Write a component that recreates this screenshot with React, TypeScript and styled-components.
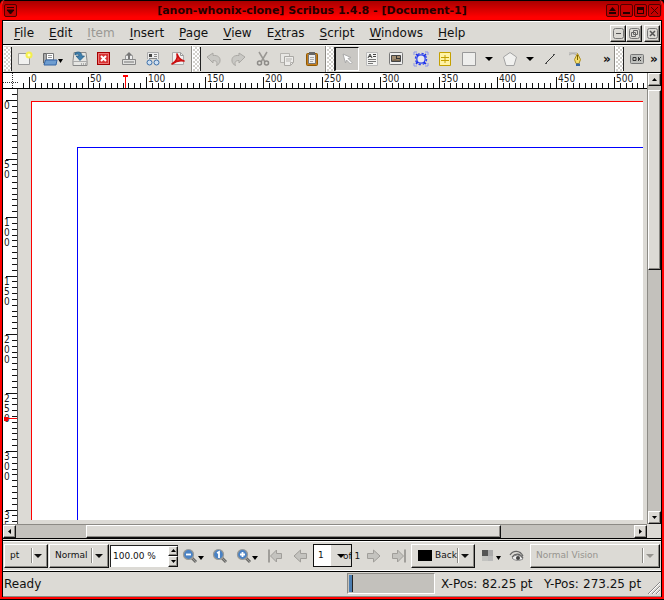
import React, { useLayoutEffect, useRef, useState } from "react";
import styled, { createGlobalStyle, css } from "styled-components";

const face = "#dcdad5";
const trough = "#c3c1bc";
const shade = "#8c8a85";

const Global = createGlobalStyle`
  *, *::before, *::after { box-sizing: border-box; }
  html, body { margin: 0; background: #000; }
  body { font: 12px/16px "DejaVu Sans", sans-serif; color: #111; }
  button, input, select { font: inherit; color: inherit; margin: 0; }
  svg { display: block; flex: none; }
`;

const raised = css`
  background: ${face};
  border: 1px solid;
  border-color: #fff #111 #111 #fff;
  box-shadow: inset -1px -1px 0 ${shade};
`;

const Shell = styled.div`
  height: 100vh;
  padding-bottom: 1px;
  overflow: hidden;
  background: #000;
`;

const Frame = styled.div`
  display: flex;
  flex-direction: column;
  height: 100%;
  overflow: hidden;
  background: ${face};
  border: solid #f00;
  border-width: 0 2px 2px;
  border-radius: 5px 5px 0 0;
`;

const TitleBar = styled.header`
  display: flex;
  align-items: center;
  flex: none;
  height: 21px;
  padding: 0 0 0 2px;
  border-top: 1px solid #000;
  border-bottom: 1px solid #000;
  background: linear-gradient(#a80000, #f00 85%);
`;

const Title = styled.h1`
  flex: 1;
  margin: 0;
  text-align: center;
  white-space: nowrap;
  overflow: hidden;
  font-size: 11px;
  line-height: 16px;
  font-weight: bold;
  color: #240000;
`;

const TitleButton = styled.button`
  display: grid;
  place-items: center;
  width: 13px;
  height: 13px;
  padding: 0;
  margin-right: 1px;
  border: 1px solid #500000;
  border-radius: 2px;
  background: #c40000;
`;

const Body = styled.div`
  display: flex;
  flex-direction: column;
  flex: 1;
  min-height: 0;
  border: solid #000;
  border-width: 0 1px;
`;

const MenuBar = styled.nav`
  display: flex;
  align-items: center;
  flex: none;
  height: 24px;
  padding: 0 1px 0 11px;
  gap: 15px;
  border-top: 1px solid #fff;
  border-bottom: 1px solid #000;
`;

const MenuItem = styled.button`
  border: 0;
  padding: 0;
  background: none;
  line-height: 16px;
  &:disabled { color: #9a9894; }
  u { text-underline-offset: 2px; }
`;

const MdiButtons = styled.div`
  display: flex;
  margin-left: auto;
  button:last-child { margin-left: 2px; }
`;

const MdiButton = styled.button`
  ${raised}
  display: grid;
  place-items: center;
  width: 16px;
  height: 17px;
  padding: 0;
`;

const ToolRow = styled.div`
  display: flex;
  flex: none;
  height: 28px;
  border-top: 1px solid #fff;
  border-bottom: 1px solid #000;
`;

const ToolGroup = styled.div<{ $width?: number }>`
  display: flex;
  align-items: center;
  justify-content: space-between;
  flex: ${(p) => (p.$width ? `0 0 ${p.$width}px` : "1 0 auto")};
  padding-right: 1px;
  border-left: 1px solid #fff;
  border-right: 1px solid ${shade};
`;

const Handle = styled.span`
  flex: none;
  align-self: stretch;
  width: 8px;
  margin: 1px 0;
  border-right: 1px solid #222;
  background-color: #d2d0cb;
  background-image: radial-gradient(circle at 1px 1px, #fff 1px, transparent 1px),
    radial-gradient(circle at 3px 3px, #fff 1px, transparent 1px);
  background-size: 4px 4px;
`;

const ToolButton = styled.button<{ $w?: number; $pressed?: boolean }>`
  display: flex;
  align-items: center;
  justify-content: center;
  flex: none;
  width: ${(p) => p.$w ?? 24}px;
  height: 24px;
  padding: 0;
  border: 0;
  background: none;
  font-size: 12px;
  svg + svg { margin-top: 4px; }
  ${(p) =>
    p.$pressed &&
    css`
      background: #cac8c4;
      border: 1px solid;
      border-color: #111 #fff #fff #111;
    `}
`;

const MoreButton = styled(ToolButton)`
  font-weight: bold;
`;

const Spacer = styled.span`
  flex: 1;
`;

const Work = styled.main`
  display: grid;
  grid-template-columns: 15px minmax(0, 1fr) 14px;
  grid-template-rows: 16px minmax(0, 1fr) 14px;
  flex: 1;
  min-height: 0;
  border-bottom: 1px solid #000;
`;

const Corner = styled.div`
  background: #fff;
  border: solid #000;
  border-width: 0 0 1px;
`;

const HRuler = styled.div`
  overflow: hidden;
  background: #fff;
  border-bottom: 1px solid #000;
`;

const VRuler = styled.div`
  min-height: 0;
  overflow: hidden;
  background: #fff;
  border-right: 1px solid #555;
`;

const Canvas = styled.section`
  min-width: 0;
  min-height: 0;
  padding: 12px 4px 4px 13px;
  background: ${face};
`;

const Sheet = styled.div`
  height: 100%;
  padding: 45px 0 0 45px;
  border: solid #f00;
  border-width: 1px 0 0 1px;
  background: #fff;
`;

const Margins = styled.div`
  height: 100%;
  border: solid #00f;
  border-width: 1px 0 0 1px;
`;

const VScroll = styled.div`
  display: flex;
  flex-direction: column;
  grid-row: 1 / 3;
  grid-column: 3;
  background: ${trough};
  border-left: 1px solid ${shade};
`;

const HScroll = styled.div`
  display: flex;
  grid-column: 1 / 3;
  background: ${trough};
  border-top: 1px solid ${shade};
`;

const ScrollButton = styled.button`
  ${raised}
  display: grid;
  place-items: center;
  flex: none;
  width: 13px;
  height: 13px;
  padding: 0;
`;

const Gap = styled.span<{ $grow: number }>`
  flex: ${(p) => p.$grow} 1 0;
`;

const Thumb = styled.span<{ $grow: number }>`
  ${raised}
  flex: ${(p) => p.$grow} 1 0;
`;

const BottomBar = styled.div`
  display: flex;
  align-items: center;
  flex: none;
  height: 32px;
  padding: 0 0 1px 1px;
  margin-top: 1px;
  border-top: 1px solid #000;
  border-bottom: 1px solid #000;
  box-shadow: inset 0 1px 0 #fff, inset 0 -1px 0 #fff;
  font-size: 9px;
  line-height: 14px;
`;

const Combo = styled.label<{ $w?: number; $divider: number; $mute?: boolean }>`
  ${raised}
  position: relative;
  display: flex;
  align-items: center;
  flex: ${(p) => (p.$w ? `0 0 ${p.$w}px` : "1 1 0")};
  height: 24px;
  margin-right: 1px;
  color: ${(p) => (p.$mute ? "#96948f" : "#111")};
  &::before {
    content: "";
    position: absolute;
    top: 3px;
    bottom: 4px;
    right: ${(p) => p.$divider}px;
    border-left: 1px solid ${shade};
    border-right: 1px solid #fff;
  }
  &::after {
    content: "";
    position: absolute;
    right: 5px;
    top: 9px;
    border: 4px solid transparent;
    border-top: 4px solid currentColor;
    border-bottom: 0;
  }
`;

const Select = styled.select<{ $pad: number }>`
  appearance: none;
  width: 100%;
  height: 100%;
  padding: 0 16px 1px ${(p) => p.$pad}px;
  border: 0;
  background: none;
  opacity: 1;
  white-space: nowrap;
`;

const Swatch = styled.span`
  flex: none;
  width: 14px;
  height: 11px;
  margin-left: 6px;
  background: #000;
`;

const Spin = styled.div`
  display: flex;
  flex: none;
  width: 68px;
  height: 22px;
  border: solid #222;
  border-width: 1px 0 0 1px;
  background: #fff;
  input {
    flex: 1;
    min-width: 0;
    padding: 0 0 0 2px;
    border: 0;
    background: none;
  }
`;

const SpinArrows = styled.div`
  display: flex;
  flex-direction: column;
  width: 10px;
  button {
    ${raised}
    display: grid;
    place-items: center;
    flex: 1;
    width: 10px;
    min-height: 0;
    padding: 0;
  }
`;

const PageCombo = styled.label`
  display: flex;
  flex: none;
  position: relative;
  width: 39px;
  height: 23px;
  border: 1px solid #111;
  background: linear-gradient(90deg, #fff 17px, ${face} 17px);
  &::after {
    content: "";
    position: absolute;
    left: 23px;
    top: 9px;
    border: 4px solid transparent;
    border-top: 4px solid #000;
    border-bottom: 0;
  }
`;

const PageCount = styled.span`
  z-index: 1;
  margin-left: -9px;
  width: 18px;
  white-space: nowrap;
`;

const StatusBar = styled.footer`
  display: flex;
  align-items: center;
  flex: none;
  height: 25px;
  padding-left: 1px;
  border-bottom: 1px solid ${shade};
`;

const Progress = styled.div`
  width: 88px;
  height: 21px;
  margin: 0 6px 2px auto;
  padding: 1px;
  border: 1px solid;
  border-color: ${shade} #fff #fff ${shade};
  background: ${trough};
  &::before {
    content: "";
    display: block;
    width: 4px;
    height: 100%;
    background: #4b7db0;
    border-right: 1px solid #222;
  }
`;

const Coord = styled.span<{ $gap: number; $w: number }>`
  flex: none;
  width: ${(p) => p.$w}px;
  margin-right: ${(p) => p.$gap}px;
  white-space: nowrap;
`;

const rulerFont = '"DejaVu Sans Condensed", "Open Sans", sans-serif';
const STEP = 585;
const at = (origin: number, i: number) => origin + Math.round((i * STEP) / 100);
const range = (a: number, b: number) => Array.from({ length: Math.max(0, b - a) }, (_, i) => a + i);

function useSize() {
  const ref = useRef<HTMLDivElement>(null);
  const [size, setSize] = useState({ w: 0, h: 0 });
  useLayoutEffect(() => {
    const node = ref.current;
    if (!node) return;
    const read = () => setSize({ w: node.clientWidth, h: node.clientHeight });
    read();
    const observer = new ResizeObserver(read);
    observer.observe(node);
    return () => observer.disconnect();
  }, []);
  return [ref, size] as const;
}

const HorizontalScale = () => {
  const [ref, { w }] = useSize();
  const ticks = Math.ceil(((w - 11) * 100) / STEP);
  const labels = Math.ceil(((w - 31) * 10) / STEP);
  return (
    <HRuler ref={ref}>
      <svg width="100%" height="15" shapeRendering="crispEdges">
        {range(-1, ticks).map((i) => (
          <rect key={i} x={at(11, i)} y={i % 10 === 0 ? 4 : 10} width="1" height="12" fill="#111" />
        ))}
        {range(0, labels).map((i) => (
          <text key={i} x={at(11, i * 10) + 2} y="9" fontFamily={rulerFont} fontSize="10" fill="#222">
            {i * 50}
          </text>
        ))}
        <path d="M105 2h5v2h-2v11h-1V4h-2z" fill="#f00" />
      </svg>
    </HRuler>
  );
};

const VerticalScale = () => {
  const [ref, { h }] = useSize();
  const ticks = Math.ceil(((h - 11) * 100) / STEP);
  const digits = range(0, Math.ceil(ticks / 10)).flatMap((i) =>
    String(i * 50)
      .split("")
      .map((digit, n) => ({ digit, key: `${i}-${n}`, y: at(11, i * 10) + 9 + n * 10 }))
  );
  return (
    <VRuler ref={ref}>
      <svg width="14" height={h} shapeRendering="crispEdges">
        {range(-1, ticks).map((i) => (
          <rect key={i} x={i % 10 === 0 ? 3 : 9} y={at(11, i)} width="12" height="1" fill="#111" />
        ))}
        {digits
          .filter((d) => d.y < h + 6)
          .map((d) => (
            <text key={d.key} x="1" y={d.y} fontFamily={rulerFont} fontSize="10" fill="#222">
              {d.digit}
            </text>
          ))}
        <path d="M1 328h4v1h9v1H5v2H1z" fill="#f00" />
      </svg>
    </VRuler>
  );
};

const Svg = ({ w = 16, h = 16, children }: { w?: number; h?: number; children: React.ReactNode }) => (
  <svg width={w} height={h} viewBox={`0 0 ${w} ${h}`} fill="none" aria-hidden="true">
    {children}
  </svg>
);

const Down = ({ w = 7 }: { w?: number }) => (
  <Svg w={w} h={4}>
    <path d={`M0 0h${w}L${w / 2} 4z`} fill="#000" />
  </Svg>
);

const Small = ({ d }: { d: string }) => (
  <Svg w={5} h={5}>
    <path d={d} fill="#000" />
  </Svg>
);
const UP = "M2.5 1L5 4H0z";
const DOWN = "M0 1h5L2.5 4z";
const LEFT = "M1 2.5L4 0v5z";
const RIGHT = "M4 2.5L1 0v5z";

const icons = {
  create: (
    <Svg>
      <path d="M1.500 2.500h11v11h-11z" fill="#f1f1ef" stroke="#999" />
      <circle cx="12" cy="4" r="3.500" fill="#f4ef4d" />
      <circle cx="12" cy="4" r="1.500" fill="#ffffc0" />
    </Svg>
  ),
  open: (
    <Svg>
      <path d="M1.500 12V2.500h4l1 1h5V12z" fill="#aaa" stroke="#666" />
      <path d="M4.500 2.500h7V9h-7z" fill="#fff" stroke="#777" />
      <path d="M6 4.500h4M6 6.500h4" stroke="#999" />
      <path d="M2 14l1.500-5h11.500l-1 5z" fill="#6e9dd0" stroke="#3465a4" />
    </Svg>
  ),
  save: (
    <Svg>
      <path d="M2 1.500h12l1 8v5H1v-5z" fill="#e6e6e3" stroke="#888" />
      <path d="M1 10.500h14" stroke="#aaa" />
      <path d="M9 13h5" stroke="#777" strokeDasharray="1 1" />
      <path d="M3 2c3-2 7-1 7 3h2.500L8 9.500 4 5h3c0-2-2-2.500-4-1z" fill="#3f7fae" stroke="#1f587e" strokeWidth=".7" />
    </Svg>
  ),
  close: (
    <Svg>
      <rect x="1.500" y="1.500" width="12" height="12" fill="#d83434" stroke="#a40000" />
      <path d="M2.500 2.500h10v10h-10z" stroke="#ee7777" />
      <path d="M5 5l5 5m0-5l-5 5" stroke="#fff" strokeWidth="2" />
    </Svg>
  ),
  print: (
    <Svg>
      <path d="M4.500 8V4.500h7V8" fill="#eee" stroke="#999" />
      <path d="M8 1l3 3H9v4H7V4H5z" fill="#777" />
      <path d="M1.500 8.500h13v5h-13z" fill="#e2e2e0" stroke="#888" />
      <path d="M3 11h10" stroke="#777" />
    </Svg>
  ),
  preflight: (
    <Svg>
      <path d="M2.500 8V1.500h11V8" fill="#eee" stroke="#aaa" />
      <path d="M4 3h3v3H4z" fill="#444" />
      <path d="M9 3.500h3M9 5.500h3M4 7.500h8" stroke="#888" />
      <circle cx="4.500" cy="11.500" r="2.500" fill="#cfe0f2" stroke="#3b6ea8" />
      <circle cx="11.500" cy="11.500" r="2.500" fill="#cfe0f2" stroke="#3b6ea8" />
    </Svg>
  ),
  pdf: (
    <Svg>
      <path d="M2.500 1.500h8l3 3v9h-11z" fill="#f1f1f1" stroke="#aaa" />
      <path d="M10.500 1.500v3h3" stroke="#999" />
      <path d="M7 3c2 4 3 6 7 7-4-1-8 0-12 3 5-3 6-6 5-10z" fill="#e53b3b" stroke="#cc1111" strokeWidth="1.600" strokeLinejoin="round" />
    </Svg>
  ),
  undo: (
    <Svg>
      <path d="M1 6l6-4v2.500c5-.5 7.500 2 7 5.500 0 2-1.500 3.500-3.500 4.500 1-3 .5-5-3.500-5V12z" fill="#c9c8c4" stroke="#aaa8a4" />
    </Svg>
  ),
  redo: (
    <Svg>
      <path d="M15 6L9 2v2.500C4 4 1.500 6.500 2 10c0 2 1.500 3.500 3.500 4.500C4.500 11.500 5 9.500 9 9.500V12z" fill="#c9c8c4" stroke="#aaa8a4" />
    </Svg>
  ),
  cut: (
    <Svg>
      <path d="M4 1l6 10M12 1L6 11" stroke="#999793" strokeWidth="1.500" />
      <circle cx="4.500" cy="12" r="2" stroke="#8d8b88" strokeWidth="1.500" />
      <circle cx="11.500" cy="12" r="2" stroke="#8d8b88" strokeWidth="1.500" />
    </Svg>
  ),
  copy: (
    <Svg>
      <path d="M1.500 2.500h9v9h-9z" fill="#e8e7e4" stroke="#b5b3af" />
      <path d="M5.500 5.500h9v6l-3 3h-6z" fill="#eeedeb" stroke="#aaa8a4" />
      <path d="M7 8h6M7 10h5M11.500 14.500v-3h3" stroke="#b5b3af" />
    </Svg>
  ),
  paste: (
    <Svg>
      <rect x="2.500" y="2.500" width="11" height="12" rx="1" fill="#c47c1c" stroke="#8f5902" />
      <path d="M4.500 3.500h7v9h-7z" fill="#eee" stroke="#777" />
      <path d="M5 1h6v3H5z" fill="#666" />
      <path d="M6 6.500h4M6 8.500h4M6 10.500h3" stroke="#aaa" />
    </Svg>
  ),
  select: (
    <Svg>
      <path d="M4 3l8 3.500-3 1 4 4-1.500 1.500-4-4-1 3z" fill="#fff" stroke="#aaa" />
    </Svg>
  ),
  text: (
    <Svg>
      <path d="M2.500 1.500h11v13h-11z" fill="#f4f4f2" stroke="#bbb" />
      <path d="M4 7l2-4 2 4M5 5.500h2M9 3.500h3M9 5.500h3" stroke="#444" />
      <path d="M4 8.500h8M4 10.500h8M4 12.500h5" stroke="#777" />
    </Svg>
  ),
  image: (
    <Svg>
      <rect x="1.500" y="1.500" width="13" height="12" rx="1" fill="#eee" stroke="#777" />
      <path d="M3.500 4.500h9v6h-9z" fill="#a28d72" stroke="#444" />
      <path d="M4 9l3-1 3 1 2-1v2H4z" fill="#7b6a52" />
      <path d="M8 5h1v3H8zM9 7h3v1H9z" fill="#333" />
    </Svg>
  ),
  render: (
    <Svg>
      <circle cx="8" cy="8" r="5.500" stroke="#2f45ee" strokeWidth="1.500" strokeDasharray="2.300 2" />
      <circle cx="8" cy="8" r="4.200" fill="#e9e8ee" stroke="#2f45ee" strokeWidth="1.300" />
      <path d="M1 4V1h3M12 1h3v3M1 12v3h3M12 15h3v-3" stroke="#8c96ea" />
      <path d="M3 3l2 2M13 3l-2 2M3 13l2-2M13 13l-2-2" stroke="#1d2ee8" strokeWidth="1.500" />
    </Svg>
  ),
  table: (
    <Svg>
      <path d="M2.500 1.500h11v13h-11z" fill="#fff3a5" stroke="#c4a000" />
      <path d="M8 4v8M4 6.500h8M4 9.500h8" stroke="#c4a000" />
    </Svg>
  ),
  shape: (
    <Svg>
      <path d="M1.500 1.500h13v13h-13z" fill="#eeeeec" stroke="#999" />
    </Svg>
  ),
  polygon: (
    <Svg>
      <path d="M8 1.500L14.500 6 12 14.500H4L1.500 6z" fill="#f1f1ef" stroke="#a3a3a3" />
    </Svg>
  ),
  line: (
    <Svg>
      <path d="M4 12l8-8" stroke="#333" />
      <path d="M3 12h2v1H3zM11 3h2v1h-2z" fill="#555" />
    </Svg>
  ),
  bezier: (
    <Svg>
      <path d="M1 4c3-2 7-2 8 2M1 2h8" stroke="#aaa" />
      <path d="M9.500 2.500l3 6-1.500 4H8L6.500 8.500z" fill="#f5df70" stroke="#ad8d1a" />
      <path d="M9.500 4v5" stroke="#7a6100" />
      <path d="M8 12.500h4V15H8z" fill="#3465a4" />
    </Svg>
  ),
  ok: (
    <Svg>
      <rect x="1.500" y="3.500" width="13" height="9" rx="1" fill="#bfc0bd" stroke="#777" />
      <path d="M4 6.500h3v3H4zM9.500 6v4M12 6l-2 2 2 2" stroke="#333" />
    </Svg>
  ),
};

const Lens = ({ mark }: { mark: string }) => (
  <Svg>
    <path d="M10 10l4 4" stroke="#6b6b68" strokeWidth="3" />
    <path d="M10 10l4 4" stroke="#999" />
    <circle cx="6.500" cy="6.500" r="5" fill="#4a82c4" stroke="#9a9a96" strokeWidth="1.200" />
    <path d={mark} stroke="#fff" strokeWidth="1.800" />
  </Svg>
);

const Arrow = ({ flip, stop }: { flip?: boolean; stop?: boolean }) => (
  <Svg>
    <g transform={flip ? "matrix(-1 0 0 1 16 0)" : undefined}>
      <path
        d={stop ? "M1.500 5.500h5v-3.500l6 6-6 6v-3.500h-5z" : "M1.500 5.500h6V2l6.500 6-6.500 6v-3.500h-6z"}
        fill="#c4c3bf"
        stroke="#a09e9a"
      />
      {stop && <path d="M14 1.500v13" stroke="#a09e9a" strokeWidth="2" />}
    </g>
  </Svg>
);

const Menu = ({ before = "", k, rest, off }: { before?: string; k: string; rest: string; off?: boolean }) => (
  <MenuItem disabled={off}>
    {before}
    <u>{k}</u>
    {rest}
  </MenuItem>
);

const Tool = ({ name, pressed, w }: { name: keyof typeof icons; pressed?: boolean; w?: number }) => (
  <ToolButton aria-label={name} $pressed={pressed} $w={w}>
    {icons[name]}
  </ToolButton>
);

export default function App() {
  return (
    <Shell>
      <Global />
      <Frame>
        <TitleBar>
          <TitleButton aria-label="Window menu">
            <Svg w={9} h={9}>
              <path d="M1 1.500h7M1 4h7L4.500 8z" stroke="#200" fill="#200" />
            </Svg>
          </TitleButton>
          <Title>[anon-whonix-clone] Scribus 1.4.8 - [Document-1]</Title>
          <TitleButton aria-label="Shade">
            <Svg w={9} h={9}>
              <path d="M1 5h7L4.500 1zM1 6h7v2H1z" fill="#200" />
            </Svg>
          </TitleButton>
          <TitleButton aria-label="Minimize">
            <Svg w={9} h={9}>
              <path d="M1 6h7v2H1z" fill="#200" />
            </Svg>
          </TitleButton>
          <TitleButton aria-label="Maximize">
            <Svg w={9} h={9}>
              <path d="M1 1h7v7H1zM2 4v3h5V4z" fill="#200" fillRule="evenodd" />
            </Svg>
          </TitleButton>
          <TitleButton aria-label="Close window">
            <Svg w={9} h={9}>
              <path d="M1 1l7 7M8 1L1 8" stroke="#400" />
            </Svg>
          </TitleButton>
        </TitleBar>
        <Body>
          <MenuBar>
            <Menu k="F" rest="ile" />
            <Menu k="E" rest="dit" />
            <Menu k="I" rest="tem" off />
            <Menu k="I" rest="nsert" />
            <Menu k="P" rest="age" />
            <Menu k="V" rest="iew" />
            <Menu before="E" k="x" rest="tras" />
            <Menu k="S" rest="cript" />
            <Menu k="W" rest="indows" />
            <Menu k="H" rest="elp" />
            <MdiButtons>
              <MdiButton aria-label="Minimize document">
                <Svg w={11} h={11}>
                  <rect x=".5" y=".5" width="10" height="10" rx="2" stroke="#777" />
                  <path d="M3 5.500h5" stroke="#555" />
                </Svg>
              </MdiButton>
              <MdiButton aria-label="Restore document">
                <Svg w={11} h={11}>
                  <rect x=".5" y=".5" width="10" height="10" rx="2" stroke="#777" />
                  <path d="M4.500 2.500h4v4h-4zM2.500 4.500h4v4h-4z" stroke="#666" />
                </Svg>
              </MdiButton>
              <MdiButton aria-label="Close document">
                <Svg w={11} h={11}>
                  <rect x=".5" y=".5" width="10" height="10" rx="2" stroke="#777" />
                  <path d="M3 3l5 5M8 3L3 8" stroke="#555" strokeWidth="1.500" />
                </Svg>
              </MdiButton>
            </MdiButtons>
          </MenuBar>
          <ToolRow>
            <ToolGroup $width={189}>
              <Handle />
              <Tool name="create" />
              <ToolButton $w={30} aria-label="open">
                {icons.open}
                <Down w={5} />
              </ToolButton>
              <Tool name="save" />
              <Tool name="close" />
              <Tool name="print" />
              <Tool name="preflight" />
              <Tool name="pdf" />
            </ToolGroup>
            <ToolGroup $width={134}>
              <Handle />
              <Tool name="undo" />
              <Tool name="redo" />
              <Tool name="cut" />
              <Tool name="copy" />
              <Tool name="paste" />
            </ToolGroup>
            <ToolGroup>
              <Handle />
              <Tool name="select" pressed />
              <Tool name="text" w={25} />
              <Tool name="image" />
              <Tool name="render" w={25} />
              <Tool name="table" />
              <Tool name="shape" />
              <ToolButton $w={16} aria-label="shape list">
                <Down w={8} />
              </ToolButton>
              <Tool name="polygon" w={26} />
              <ToolButton $w={14} aria-label="polygon settings">
                <Down w={8} />
              </ToolButton>
              <Tool name="line" w={26} />
              <Tool name="bezier" w={26} />
              <Spacer />
              <MoreButton $w={12} aria-label="more tools">
                »
              </MoreButton>
            </ToolGroup>
            <ToolGroup $width={46}>
              <Handle />
              <Tool name="ok" />
              <MoreButton $w={10} aria-label="more PDF tools">
                »
              </MoreButton>
            </ToolGroup>
          </ToolRow>
          <Work>
            <Corner>
              <Svg w={15} h={15}>
                <path d="M0 9.500h15M9.500 0v15" stroke="#333" strokeDasharray="1 1" />
              </Svg>
            </Corner>
            <HorizontalScale />
            <VScroll>
              <ScrollButton aria-label="Scroll up">
                <Small d={UP} />
              </ScrollButton>
              <Gap $grow={4} />
              <Thumb $grow={179} />
              <Gap $grow={243} />
              <ScrollButton aria-label="Scroll down">
                <Small d={DOWN} />
              </ScrollButton>
            </VScroll>
            <VerticalScale />
            <Canvas>
              <Sheet>
                <Margins />
              </Sheet>
            </Canvas>
            <HScroll>
              <ScrollButton aria-label="Scroll left">
                <Small d={LEFT} />
              </ScrollButton>
              <Gap $grow={70} />
              <Thumb $grow={415} />
              <Gap $grow={133} />
              <ScrollButton aria-label="Scroll right">
                <Small d={RIGHT} />
              </ScrollButton>
            </HScroll>
          </Work>
          <BottomBar>
            <Combo $w={44} $divider={14}>
              <Select $pad={5} aria-label="Unit">
                <option>pt</option>
              </Select>
            </Combo>
            <Combo $w={60} $divider={15}>
              <Select $pad={5} aria-label="Preview quality">
                <option>Normal</option>
              </Select>
            </Combo>
            <Spin>
              <input aria-label="Zoom" defaultValue="100.00 %" />
              <SpinArrows>
                <button aria-label="Increase zoom">
                  <Small d={UP} />
                </button>
                <button aria-label="Decrease zoom">
                  <Small d={DOWN} />
                </button>
              </SpinArrows>
            </Spin>
            <ToolButton $w={30} aria-label="Zoom out">
              <Lens mark="M4 6.500h5" />
              <Down w={6} />
            </ToolButton>
            <ToolButton $w={24} aria-label="Zoom to 100%">
              <Lens mark="M5 5l2-1v6" />
            </ToolButton>
            <ToolButton $w={30} aria-label="Zoom in">
              <Lens mark="M4 6.500h5M6.500 4v5" />
              <Down w={6} />
            </ToolButton>
            <ToolButton $w={25} aria-label="First page">
              <Arrow flip stop />
            </ToolButton>
            <ToolButton $w={26} aria-label="Previous page">
              <Arrow flip />
            </ToolButton>
            <PageCombo>
              <Select $pad={4} aria-label="Current page">
                <option>1</option>
              </Select>
            </PageCombo>
            <PageCount>of 1</PageCount>
            <ToolButton $w={25} aria-label="Next page">
              <Arrow />
            </ToolButton>
            <ToolButton $w={25} aria-label="Last page">
              <Arrow stop />
            </ToolButton>
            <Combo $w={64} $divider={15}>
              <Swatch />
              <Select $pad={3} aria-label="Layer">
                <option>Back</option>
              </Select>
            </Combo>
            <ToolButton $w={28} aria-label="Color management">
              <Svg>
                <path d="M2 2h6v6H2z" fill="#555" />
                <path d="M8 2h5v6H8z" fill="#aaa" />
                <path d="M2 8h6v5H2z" fill="#c3c3c0" />
                <path d="M8 8h5v5H8z" fill="#bbb" />
              </Svg>
              <Down w={5} />
            </ToolButton>
            <ToolButton $w={26} aria-label="Preview mode">
              <Svg>
                <path d="M3 10c3-4 8-4 11 1-4 2-8 2-11-1z" stroke="#888" fill="#eee" />
                <path d="M1 7c3-5 10-5 13 1M3 9c3-4 8-4 11 1" stroke="#666" strokeWidth="1.200" />
                <circle cx="9" cy="10" r="2" fill="#444" />
              </Svg>
            </ToolButton>
            <Combo $divider={15} $mute>
              <Select $pad={5} aria-label="Vision" disabled>
                <option>Normal Vision</option>
              </Select>
            </Combo>
          </BottomBar>
          <StatusBar>
            <span>Ready</span>
            <Progress role="progressbar" aria-label="Progress" />
            <Coord $w={35} $gap={6}>
              X-Pos:
            </Coord>
            <Coord $w={50} $gap={12}>
              82.25 pt
            </Coord>
            <Coord $w={33} $gap={6}>
              Y-Pos:
            </Coord>
            <Coord $w={59} $gap={5}>
              273.25 pt
            </Coord>
            <Svg w={14} h={22}>
              <path d="M1 21L13 9M5 21l8-8M9 21l4-4" stroke="#888" />
              <path d="M2 21L13 10M6 21l7-7M10 21l3-3" stroke="#fff" />
            </Svg>
          </StatusBar>
        </Body>
      </Frame>
    </Shell>
  );
}
